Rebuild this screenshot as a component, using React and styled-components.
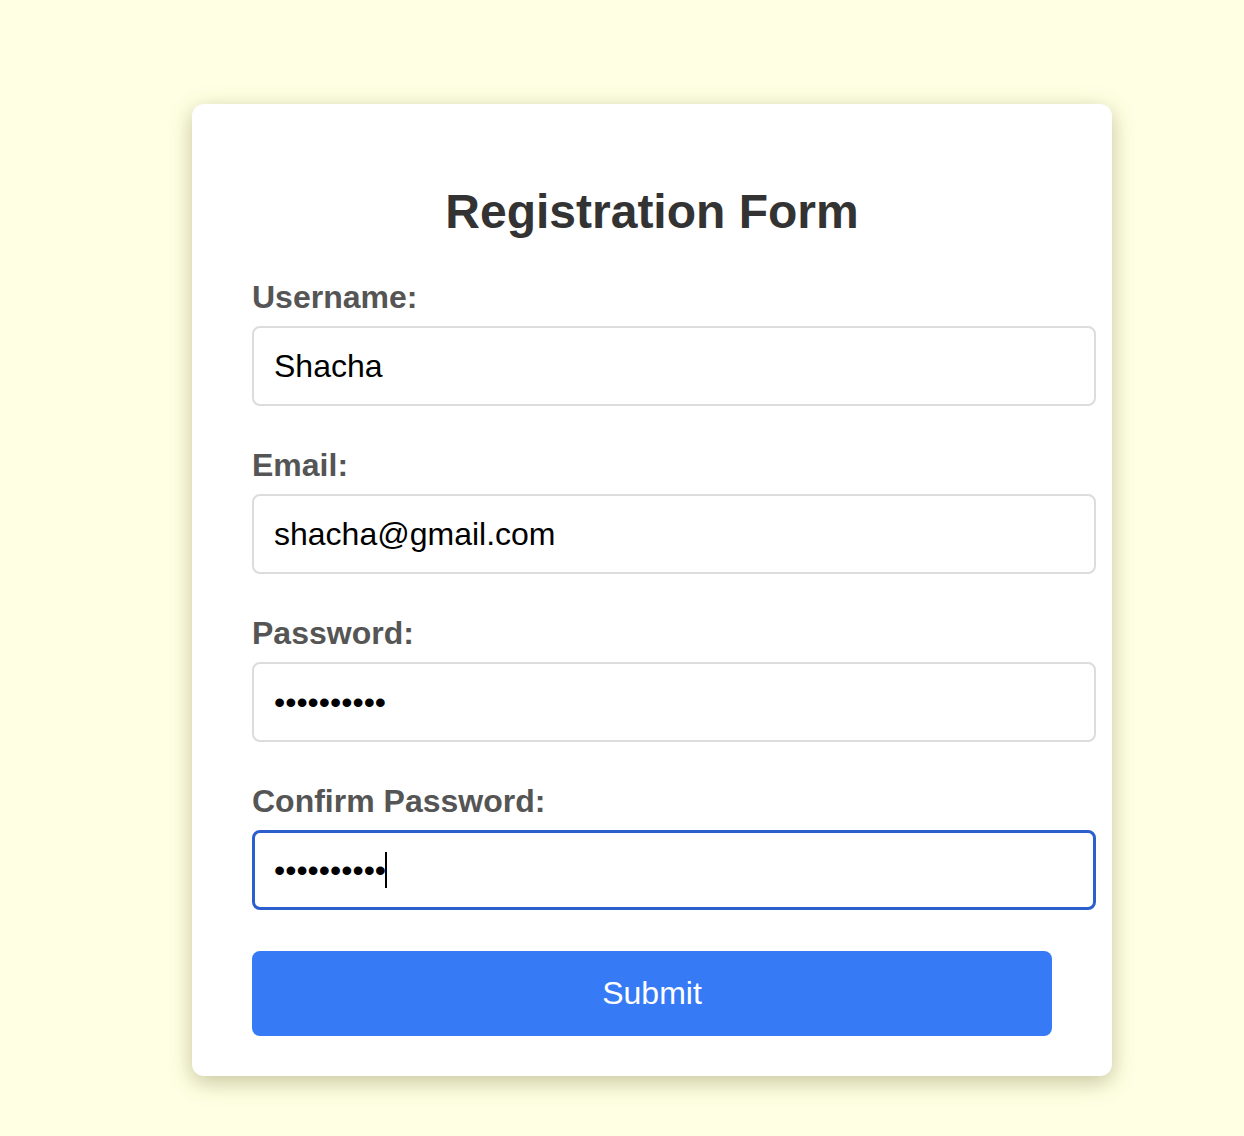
import styled, { createGlobalStyle } from "styled-components";

const GlobalStyle = createGlobalStyle`
  html, body {
    margin: 0;
    padding: 0;
    background: #ffffe3;
  }
  body {
    font-family: "Liberation Sans", Arial, sans-serif;
  }
`;

const fields = [
  { id: "username", label: "Username:", type: "text", value: "Shacha" },
  { id: "email", label: "Email:", type: "email", value: "shacha@gmail.com" },
  { id: "password", label: "Password:", type: "password", value: "secret1234" },
  {
    id: "confirm",
    label: "Confirm Password:",
    type: "password",
    value: "secret1234",
    focused: true,
  },
];

export default function App() {
  return (
    <Page>
      <GlobalStyle />
      <Card>
        <Title>Registration Form</Title>
        <form onSubmit={(e) => e.preventDefault()}>
          {fields.map((f) => (
            <Field key={f.id}>
              <Label htmlFor={f.id}>{f.label}</Label>
              <InputWrap>
                <Input
                  id={f.id}
                  type={f.type}
                  defaultValue={f.value}
                  $focused={f.focused}
                />
                {f.focused && <Caret />}
              </InputWrap>
            </Field>
          ))}
          <SubmitButton type="submit">Submit</SubmitButton>
        </form>
      </Card>
    </Page>
  );
}

const Page = styled.div`
  min-height: 1136px;
  padding: 104px 0 60px 192px;
  box-sizing: border-box;
`;

const Card = styled.div`
  width: 920px;
  box-sizing: border-box;
  padding: 40px 60px;
  background: #fff;
  border-radius: 12px;
  box-shadow: 0 6px 22px rgba(90, 90, 30, 0.35);
`;

const Title = styled.h2`
  margin: 40px 0;
  text-align: center;
  font-size: 48px;
  font-weight: bold;
  color: #333;
`;

const Field = styled.div`
  margin-bottom: 41px;
`;

const Label = styled.label`
  display: block;
  margin-bottom: 10px;
  font-size: 32px;
  font-weight: bold;
  color: #555;
`;

const InputWrap = styled.div`
  position: relative;
  width: 844px;
`;

const Input = styled.input`
  display: block;
  width: 844px;
  height: 80px;
  box-sizing: border-box;
  padding: 0 20px;
  font-family: "Liberation Sans", Arial, sans-serif;
  font-size: 32px;
  color: #000;
  background: #fff;
  border: ${(p) => (p.$focused ? "3px solid #2a5fcd" : "2px solid #dcdcdc")};
  padding-left: ${(p) => (p.$focused ? "19px" : "20px")};
  border-radius: 8px;
  outline: none;
`;

const Caret = styled.span`
  position: absolute;
  left: 133px;
  top: 22px;
  width: 2px;
  height: 36px;
  background: #000;
`;

const SubmitButton = styled.button`
  display: block;
  width: 100%;
  height: 85px;
  border: none;
  border-radius: 8px;
  background: #367af6;
  color: #fff;
  font-family: "Liberation Sans", Arial, sans-serif;
  font-size: 32px;
  cursor: pointer;
`;
